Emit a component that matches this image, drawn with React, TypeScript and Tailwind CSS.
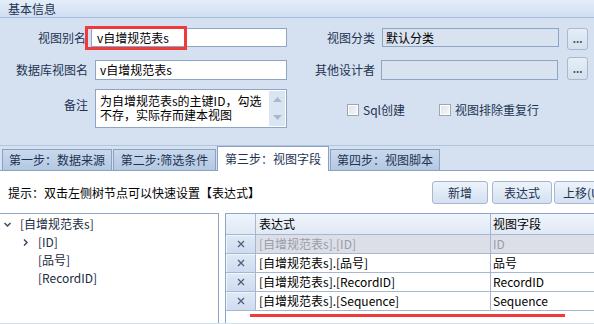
const labelCls = 'text-[#1e3352] text-right shrink-0'
const inputCls = 'bg-white border border-[#8ea6c6] shrink-0 flex items-center pl-[4px] text-black whitespace-nowrap'
const roCls = 'bg-[#d9e3ef] border border-[#8da4c4] shrink-0 flex items-center pl-[3px] text-black whitespace-nowrap'

function DotsButton({ h }: { h: string }) {
  return (
    <div className={`w-[21px] ${h} shrink-0 rounded-[3px] border border-[#aab9cc] bg-gradient-to-b from-[#e6eef7] to-[#d4e0ee] flex items-end justify-center pb-[5px] text-[#3a4a5e] text-[10px] leading-none font-bold`}>
      ...
    </div>
  )
}

function CheckBox({ label }: { label: string }) {
  return (
    <div className="flex items-center gap-[4px]">
      <div className="w-[12px] h-[12px] border border-[#9aa6b4] bg-gradient-to-br from-[#dfe3e8] to-[#f6f7f9] shadow-[inset_0_0_0_1px_#ffffff]" />
      <span className="text-[#1e3352]">{label}</span>
    </div>
  )
}

function Tab({ label, w, active }: { label: string; w: string; active?: boolean }) {
  if (active) {
    return (
      <div className={`${w} ml-[1px] h-[25px] -mb-px bg-white border border-b-0 border-[#8aa2c2] flex items-center justify-center text-[#1e3352] relative z-10`}>
        {label}
      </div>
    )
  }
  return (
    <div className={`${w} ml-[1px] first:ml-[2px] h-[21px] border border-b-0 border-[#8aa2c2] bg-gradient-to-b from-[#c9d9ed] to-[#b3c8e3] flex items-center justify-center text-[#1e3352]`}>
      {label}
    </div>
  )
}

function ToolButton({ label, w, ml, left }: { label: string; w: string; ml: string; left?: boolean }) {
  return (
    <div className={`${w} ${ml} h-[23px] shrink-0 rounded-[3px] border border-[#a6b8d1] bg-gradient-to-b from-[#edf3fa] to-[#d4e1f1] flex items-center ${left ? 'justify-start pl-[8px]' : 'justify-center'} text-[#1e3352] whitespace-nowrap`}>
      {label}
    </div>
  )
}

function Chevron({ down }: { down?: boolean }) {
  return (
    <svg width="7" height="7" viewBox="0 0 7 7" className="shrink-0">
      {down ? (
        <polyline points="0.5,2 3.5,5 6.5,2" fill="none" stroke="#3b4a5e" strokeWidth="1.5" />
      ) : (
        <polyline points="2,0.5 5,3.5 2,6.5" fill="none" stroke="#3b4a5e" strokeWidth="1.5" />
      )}
    </svg>
  )
}

function XMark() {
  return (
    <svg width="8" height="8" viewBox="0 0 8 8">
      <path d="M1 1 L7 7 M7 1 L1 7" stroke="#4f6079" strokeWidth="1.3" />
    </svg>
  )
}

const rows = [
  { expr: '[自增规范表s].[ID]', field: 'ID', disabled: true },
  { expr: '[自增规范表s].[品号]', field: '品号' },
  { expr: '[自增规范表s].[RecordID]', field: 'RecordID' },
  { expr: '[自增规范表s].[Sequence]', field: 'Sequence' },
]

export default function App() {
  return (
    <div className="w-[594px] h-[324px] overflow-hidden relative bg-[#d5e1f0] text-[12px] leading-none font-['Noto_Sans_CJK_SC','Microsoft_YaHei',sans-serif]">
      {/* 基本信息 */}
      <div className="h-[18px] border-b border-[#a8bdd9] bg-gradient-to-b from-[#e4eefa] to-[#d0def1] pl-[8px] flex items-center text-[#1e3352]">
        基本信息
      </div>

      <div className="h-[128px] border-b border-[#b3c5dc] pt-[10px]">
        {/* row 1 */}
        <div className="flex items-start">
          <div className={`${labelCls} w-[86px] h-[19px] leading-[19px]`}>视图别名</div>
          <div className={`${inputCls} ml-[5px] w-[196px] h-[19px] pl-[5px]`}>v自增规范表s</div>
          <div className={`${labelCls} w-[88px] h-[19px] leading-[19px]`}>视图分类</div>
          <div className={`${roCls} ml-[7px] w-[177px] h-[19px]`}>默认分类</div>
          <div className="ml-[8px]"><DotsButton h="h-[22px]" /></div>
        </div>

        {/* row 2 */}
        <div className="flex items-start mt-[7px]">
          <div className={`${labelCls} w-[88px] h-[20px] mt-[3px] leading-[20px]`}>数据库视图名</div>
          <div className={`${inputCls} ml-[7px] mt-[3px] w-[192px] h-[20px]`}>v自增规范表s</div>
          <div className={`${labelCls} w-[88px] h-[20px] mt-[3px] leading-[20px]`}>其他设计者</div>
          <div className={`${roCls} ml-[6px] mt-[3px] w-[177px] h-[20px]`} />
          <div className="ml-[9px]"><DotsButton h="h-[23px]" /></div>
        </div>

        {/* row 3 */}
        <div className="flex items-start mt-[9px]">
          <div className={`${labelCls} w-[88px] pt-[10px]`}>备注</div>
          <div className="ml-[7px] w-[192px] h-[39px] bg-white border border-[#8ea6c6] flex shrink-0">
            <div className="flex-1 pl-[4px] pt-[4px] text-black whitespace-nowrap leading-[14px]">
              <div>为自增规范表s的主键ID，勾选</div>
              <div>不存，实际存而建本视图</div>
            </div>
            <div className="w-[16px] my-[1px] mr-[1px] bg-[#dbe5f2] flex flex-col items-center justify-between py-[6px]">
              <svg width="9" height="5" viewBox="0 0 9 5"><polygon points="0,5 4.5,0 9,5" fill="#a8b9cf" /></svg>
              <svg width="9" height="5" viewBox="0 0 9 5"><polygon points="0,0 9,0 4.5,5" fill="#a8b9cf" /></svg>
            </div>
          </div>
          <div className="ml-[60px] mt-[15px] flex items-center">
            <CheckBox label="Sql创建" />
            <div className="ml-[34px]"><CheckBox label="视图排除重复行" /></div>
          </div>
        </div>
      </div>

      {/* tabs */}
      <div className="h-[25px] border-b border-[#8aa2c2] flex items-end">
        <Tab label="第一步：数据来源" w="w-[110px]" />
        <Tab label="第二步:筛选条件" w="w-[103px]" />
        <Tab label="第三步：视图字段" w="w-[112px]" active />
        <Tab label="第四步：视图脚本" w="w-[110px]" />
      </div>

      {/* content */}
      <div className="h-[152px] bg-white">
        <div className="flex items-center pt-[10px]">
          <div className="w-[432px] shrink-0 pl-[8px] text-black whitespace-nowrap">提示：双击左侧树节点可以快速设置【表达式】</div>
          <ToolButton label="新增" w="w-[56px]" ml="" />
          <ToolButton label="表达式" w="w-[60px]" ml="ml-[4px]" />
          <ToolButton label="上移(U)" w="w-[70px]" ml="ml-[2px]" left />
        </div>

        <div className="flex mt-[9px] h-[110px]">
          {/* tree */}
          <div className="w-[219px] shrink-0 border-t border-r border-[#8ea6c6] pt-[1px] text-[#1b2a3f]">
            <div className="h-[18px] flex items-center pl-[4px]">
              <Chevron down />
              <span className="ml-[9px]">[自增规范表s]</span>
            </div>
            <div className="h-[18px] flex items-center pl-[22px]">
              <Chevron />
              <span className="ml-[9px]">[ID]</span>
            </div>
            <div className="h-[18px] flex items-center pl-[38px]">[品号]</div>
            <div className="h-[18px] flex items-center pl-[38px]">[RecordID]</div>
          </div>

          {/* grid */}
          <div className="ml-[6px] flex-1 border-t border-l border-[#8ea6c6]">
            <div className="flex h-[21px] border-b border-[#a5b7d1] bg-gradient-to-b from-[#f0f5fb] to-[#dfe8f5]">
              <div className="w-[30px] shrink-0 border-r border-[#a5b7d1]" />
              <div className="w-[235px] shrink-0 border-r border-[#a5b7d1] flex items-center pl-[3px] text-black">表达式</div>
              <div className="flex-1 flex items-center pl-[2px] text-black">视图字段</div>
            </div>
            {rows.map((r) => (
              <div key={r.expr} className={`flex h-[19px] border-b border-[#a5b7d1] ${r.disabled ? 'bg-[#dcdfe8]' : 'bg-white'}`}>
                <div className="w-[30px] shrink-0 border-r border-[#a5b7d1] bg-gradient-to-b from-[#dfe9f6] to-[#cfdcef] shadow-[inset_1px_1px_0_#f2f6fb] flex items-center justify-center">
                  <XMark />
                </div>
                <div className={`w-[235px] shrink-0 border-r border-[#a5b7d1] flex items-center pl-[3px] whitespace-nowrap ${r.disabled ? 'text-[#9a9ca8]' : 'text-black'}`}>
                  {r.expr}
                </div>
                <div className={`flex-1 flex items-center pl-[2px] whitespace-nowrap ${r.disabled ? 'text-[#9a9ca8]' : 'text-black'}`}>
                  {r.field}
                </div>
              </div>
            ))}
          </div>
        </div>
      </div>

      {/* annotations */}
      <div className="absolute left-[85px] top-[26px] w-[102px] h-[24px] border-[3px] border-[#f03a3a]" />
      <div className="absolute left-[250px] top-[314px] w-[315px] h-[3px] bg-[#f03a3a]" />
    </div>
  )
}
